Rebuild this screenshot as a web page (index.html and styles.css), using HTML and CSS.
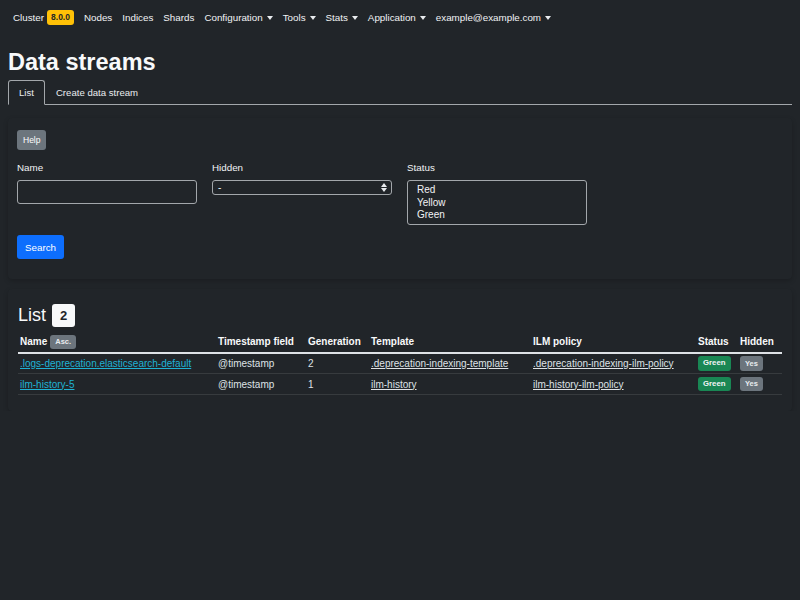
FILE: index.html
```html
<!DOCTYPE html>
<html lang="en">
<head>
<meta charset="utf-8">
<title>Data streams</title>
<link rel="stylesheet" href="styles.css">
</head>
<body>
<nav class="navbar">
  <a class="nav-item">Cluster <span class="badge badge-warning">8.0.0</span></a>
  <a class="nav-item">Nodes</a>
  <a class="nav-item">Indices</a>
  <a class="nav-item">Shards</a>
  <a class="nav-item dropdown">Configuration</a>
  <a class="nav-item dropdown">Tools</a>
  <a class="nav-item dropdown">Stats</a>
  <a class="nav-item dropdown">Application</a>
  <a class="nav-item dropdown">example@example.com</a>
</nav>
<main class="page">
  <h1 class="title">Data streams</h1>
  <div class="tabs">
    <a class="tab active">List</a>
    <a class="tab">Create data stream</a>
  </div>

  <section class="card">
    <button class="btn btn-secondary btn-sm">Help</button>
    <div class="form-row">
      <div class="field">
        <label>Name</label>
        <input class="input" type="text">
      </div>
      <div class="field">
        <label>Hidden</label>
        <div class="select"><span>-</span><span class="updown"></span></div>
      </div>
      <div class="field">
        <label>Status</label>
        <div class="multi">
          <div>Red</div>
          <div>Yellow</div>
          <div>Green</div>
        </div>
      </div>
    </div>
    <button class="btn btn-primary">Search</button>
  </section>

  <section class="card card-list">
    <h2 class="list-title">List <span class="badge badge-light">2</span></h2>
    <table class="table">
      <thead>
        <tr>
          <th class="c-name"><span class="th-sort">Name <span class="badge badge-gray">Asc.</span></span></th>
          <th class="c-ts">Timestamp field</th>
          <th class="c-gen">Generation</th>
          <th class="c-tpl">Template</th>
          <th class="c-ilm">ILM policy</th>
          <th class="c-st">Status</th>
          <th class="c-hid">Hidden</th>
        </tr>
      </thead>
      <tbody>
        <tr>
          <td><a class="link-primary">.logs-deprecation.elasticsearch-default</a></td>
          <td>@timestamp</td>
          <td>2</td>
          <td><a class="link">.deprecation-indexing-template</a></td>
          <td><a class="link">.deprecation-indexing-ilm-policy</a></td>
          <td><span class="badge badge-success">Green</span></td>
          <td><span class="badge badge-gray">Yes</span></td>
        </tr>
        <tr>
          <td><a class="link-primary">ilm-history-5</a></td>
          <td>@timestamp</td>
          <td>1</td>
          <td><a class="link">ilm-history</a></td>
          <td><a class="link">ilm-history-ilm-policy</a></td>
          <td><span class="badge badge-success">Green</span></td>
          <td><span class="badge badge-gray">Yes</span></td>
        </tr>
      </tbody>
    </table>
  </section>
</main>
</body>
</html>
```

FILE: styles.css
```css
* { box-sizing: border-box; }
html, body {
  margin: 0;
  background: #212529;
  color: #dee2e6;
  font-family: "Liberation Sans", Arial, sans-serif;
  font-size: 10px;
}
a { color: inherit; text-decoration: none; }

.navbar {
  display: flex;
  align-items: center;
  height: 35px;
  padding: 0 0 0 13px;
  gap: 10px;
  font-size: 9.8px;
  color: #f1f3f5;
}
.nav-item { display: inline-flex; align-items: center; gap: 3px; }
.dropdown { gap: 4px; }
.dropdown::after {
  content: "";
  display: inline-block;
  border-top: 4px solid #e9ecef;
  border-left: 3px solid transparent;
  border-right: 3px solid transparent;
}

.badge {
  display: inline-block;
  font-weight: 700;
  border-radius: 3px;
  line-height: 1;
}
.badge-warning {
  background: #ffc107;
  color: #212529;
  font-size: 8.5px;
  padding: 3px 4px;
}

.page { padding: 0 8px; }
.title {
  margin: 13px 0 4px;
  font-size: 23.5px;
  font-weight: 700;
  color: #f8f9fa;
  line-height: 28px;
}

.tabs {
  display: flex;
  border-bottom: 1px solid #a3a7ab;
  height: 25px;
}
.tab {
  display: flex;
  align-items: center;
  padding: 0 10px;
  font-size: 9.6px;
  color: #e9ecef;
  border: 1px solid transparent;
  border-radius: 3px 3px 0 0;
  margin-bottom: -1px;
}
.tab.active {
  border-color: #a3a7ab;
  border-bottom-color: #212529;
  background: #212529;
}

.card {
  margin-top: 13px;
  padding: 12px 9px 20px;
  background: #212529;
  border-radius: 4px;
  box-shadow: 0 2px 5px rgba(0, 0, 0, 0.2);
}

.btn {
  border: none;
  border-radius: 3px;
  font-family: inherit;
  color: #fff;
  cursor: pointer;
}
.btn-sm {
  font-size: 8.5px;
  height: 20px;
  padding: 0 6px;
}
.btn-secondary { background: #6c757d; }
.btn-primary {
  background: #0d6efd;
  font-size: 9.8px;
  height: 24px;
  padding: 0 8px;
}

.form-row {
  display: grid;
  grid-template-columns: 180px 180px 180px;
  gap: 15px;
  margin: 11px 0 10px;
}
.field label {
  display: block;
  font-size: 9.8px;
  color: #f1f3f5;
  margin-bottom: 6px;
  line-height: 13px;
}
.input {
  display: block;
  width: 180px;
  height: 24px;
  background: #212529;
  border: 1px solid #a3a7ab;
  border-radius: 3px;
}
.select {
  display: flex;
  align-items: center;
  justify-content: space-between;
  height: 15px;
  padding: 0 4px 0 5px;
  border: 1px solid #a3a7ab;
  border-radius: 3px;
  font-size: 10px;
  color: #f1f3f5;
}
.updown {
  position: relative;
  width: 6px;
  height: 9px;
}
.updown::before, .updown::after {
  content: "";
  position: absolute;
  left: 0;
  border-left: 3px solid transparent;
  border-right: 3px solid transparent;
}
.updown::before { top: 0; border-bottom: 4px solid #e9ecef; }
.updown::after { bottom: 0; border-top: 4px solid #e9ecef; }
.multi {
  height: 45px;
  padding: 3px 9px;
  border: 1px solid #a3a7ab;
  border-radius: 3px;
  font-size: 10px;
  line-height: 12.5px;
  color: #f1f3f5;
}

.card-list { margin-top: 10px; padding: 15px 10px 16px; }
.list-title {
  margin: 0 0 6px;
  font-size: 18px;
  font-weight: 500;
  color: #f8f9fa;
  display: flex;
  align-items: center;
  gap: 6px;
}
.badge-light {
  background: #f8f9fa;
  color: #212529;
  font-size: 13px;
  padding: 5px 8px;
  border-radius: 3px;
}

.table {
  width: 100%;
  border-collapse: collapse;
  font-size: 10px;
}
.table th {
  text-align: left;
  font-weight: 700;
  color: #f8f9fa;
  padding: 2px 2px 3px;
  height: 19px;
  border-bottom: 2px solid #dee2e6;
}
.th-sort {
  display: inline-flex;
  align-items: center;
  gap: 3px;
}
.table td {
  padding: 0 2px;
  height: 21px;
  border-bottom: 1px solid #373b3e;
  color: #dee2e6;
  white-space: nowrap;
}
.c-name { width: 198px; }
.c-ts { width: 90px; }
.c-gen { width: 63px; }
.c-tpl { width: 162px; }
.c-ilm { width: 165px; }
.c-st { width: 42px; }

.badge-gray {
  background: #6c757d;
  color: #e9ecef;
  font-size: 7.5px;
  padding: 3px 5px;
}
.badge-success {
  background: #198754;
  color: #f1f3f5;
  font-size: 7.8px;
  padding: 3px 5px;
}
td .badge { padding: 3.5px 5px; }
.link-primary {
  color: #1fb2d4;
  text-decoration: underline;
}
.link {
  color: #dee2e6;
  text-decoration: underline;
}
```
